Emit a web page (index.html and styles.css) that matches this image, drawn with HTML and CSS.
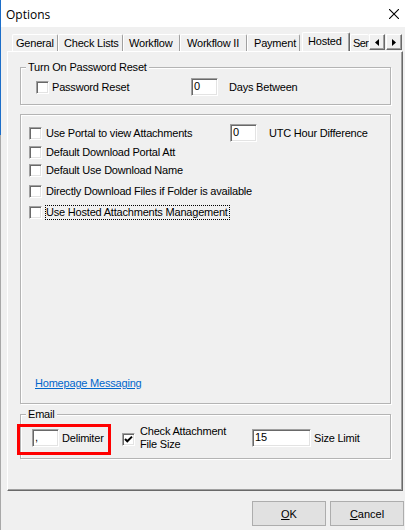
FILE: index.html
```html
<!DOCTYPE html>
<html lang="en">
<head>
    <meta charset="UTF-8">
    <title>Options</title>
    <link rel="stylesheet" href="styles.css">
</head>
<body>
    <div class="window">
        <div class="titlebar">
            <span class="title">Options</span>
            <svg class="close" width="10" height="10" viewBox="0 0 10 10">
                <path d="M0 0 L10 10 M10 0 L0 10" stroke="#000" stroke-width="1.1" fill="none"/>
            </svg>
        </div>

        <div class="tabstrip">
            <div class="tabs">
                <div class="tab tab-general">General</div>
                <div class="tab tab-checklists">Check Lists</div>
                <div class="tab tab-workflow">Workflow</div>
                <div class="tab tab-workflow2">Workflow II</div>
                <div class="tab tab-payment">Payment</div>
                <div class="tab tab-hosted selected">Hosted</div>
                <div class="tab tab-security">Ser</div>
            </div>
            <div class="scroller">
                <div class="scroll-btn">
                    <svg width="4" height="7" viewBox="0 0 4 7"><path d="M4 0 L0 3.5 L4 7 Z" fill="#000"/></svg>
                </div>
                <div class="scroll-btn">
                    <svg width="4" height="7" viewBox="0 0 4 7"><path d="M0 0 L4 3.5 L0 7 Z" fill="#000"/></svg>
                </div>
            </div>
        </div>

        <div class="panel">
            <div class="group group-password">
                <span class="group-label">Turn On Password Reset</span>
                <div class="row">
                    <label class="check-item check-tight pw-check">
                        <span class="checkbox"></span>
                        <span>Password Reset</span>
                    </label>
                    <span class="textbox tb-small">0</span>
                    <span class="after-label">Days Between</span>
                </div>
            </div>

            <div class="group group-hosted">
                <div class="row row-1">
                    <label class="check-item portal-check">
                        <span class="checkbox"></span>
                        <span>Use Portal to view Attachments</span>
                    </label>
                    <span class="textbox tb-small">0</span>
                    <span class="after-label">UTC Hour Difference</span>
                </div>
                <div class="row row-2">
                    <label class="check-item">
                        <span class="checkbox"></span>
                        <span>Default Download Portal Att</span>
                    </label>
                </div>
                <div class="row row-3">
                    <label class="check-item">
                        <span class="checkbox"></span>
                        <span>Default Use Download Name</span>
                    </label>
                </div>
                <div class="row row-4">
                    <label class="check-item">
                        <span class="checkbox"></span>
                        <span>Directly Download Files if Folder is available</span>
                    </label>
                </div>
                <div class="row row-5">
                    <label class="check-item">
                        <span class="checkbox"></span>
                        <span class="focused">Use Hosted Attachments Management</span>
                    </label>
                </div>
                <a class="link" href="#">Homepage Messaging</a>
            </div>

            <div class="group group-email">
                <span class="group-label">Email</span>
                <div class="highlight"></div>
                <div class="row">
                    <div class="delim-field">
                        <span class="textbox tb-small">,</span>
                        <span class="delim-label">Delimiter</span>
                    </div>
                    <label class="check-item size-check">
                        <span class="checkbox checked">
                            <svg width="11" height="11" viewBox="0 0 11 11"><path d="M2 5 L4.3 7.3 L9 2.6" stroke="#000" stroke-width="2" fill="none"/></svg>
                        </span>
                        <span class="two-line">Check Attachment<br>File Size</span>
                    </label>
                    <span class="textbox tb-wide">15</span>
                    <span class="delim-label">Size Limit</span>
                </div>
            </div>
        </div>

        <div class="buttons">
            <button class="btn"><u>O</u>K</button>
            <button class="btn"><u>C</u>ancel</button>
        </div>
    </div>
</body>
</html>
```

FILE: styles.css
```css
body {
    margin: 0;
    background-color: #f0f0f0;
    font-family: "Liberation Sans", Arial, sans-serif;
    font-size: 11px;
    letter-spacing: -0.2px;
    color: #000;
}

.window {
    width: 405px;
    height: 530px;
    box-sizing: border-box;
    overflow: hidden;
    border-left: 1px solid #1c6ec9;
    border-image: linear-gradient(to bottom, #1c6ec9 0, #1c6ec9 135px, #a8a8a8 135px) 1;
    background-color: #f0f0f0;
}

.titlebar {
    height: 27px;
    background-color: #fff;
    display: flex;
    align-items: center;
    justify-content: space-between;
    padding: 0 6px 0 5px;
}

.title {
    font-family: "Open Sans", "Noto Sans", sans-serif;
    font-size: 12px;
    letter-spacing: 0;
    margin-top: 1px;
}

.close {
    margin-top: 1px;
}

/* tabs */
.tabstrip {
    height: 24px;
    display: flex;
    padding-left: 11px;
}

.tabs {
    width: 357px;
    display: flex;
    align-items: flex-end;
    overflow: hidden;
}

.tab {
    flex: none;
    box-sizing: border-box;
    height: 17px;
    line-height: 16px;
    padding-left: 3px;
    border-top: 1px solid #fff;
    border-left: 1px solid #fff;
    border-right: 1px solid #a0a0a0;
    border-radius: 2px 2px 0 0;
    background-color: #f0f0f0;
    white-space: nowrap;
}

.tab-general { width: 46px; }
.tab-checklists { width: 65px; padding-left: 5px; }
.tab-workflow { width: 57px; padding-left: 5px; }
.tab-workflow2 { width: 67px; padding-left: 6px; }
.tab-payment { width: 53px; margin-right: 2px; padding-left: 6px; }
.tab-hosted { width: 48px; padding-left: 5px; }
.tab-security { width: 19px; padding-left: 2px; letter-spacing: -0.6px; border-right: none; }

.tab.selected {
    height: 20px;
    line-height: 17px;
    margin-bottom: -1px;
    position: relative;
    z-index: 1;
    border-right: 1px solid #696969;
    box-shadow: inset -1px 0 #a0a0a0;
}

.scroller {
    display: flex;
    margin-top: 7px;
    gap: 1px;
}

.scroll-btn {
    width: 16px;
    height: 16px;
    box-sizing: border-box;
    display: flex;
    align-items: center;
    justify-content: center;
    background-color: #f0f0f0;
    border-top: 1px solid #fff;
    border-left: 1px solid #fff;
    border-right: 1px solid #696969;
    border-bottom: 1px solid #696969;
    box-shadow: inset -1px -1px #a0a0a0;
}

/* panel */
.panel {
    width: 396px;
    height: 440px;
    box-sizing: border-box;
    margin-left: 6px;
    padding: 15px 11px 0 12px;
    border-top: 1px solid #fff;
    border-left: 1px solid #fff;
    border-right: 1px solid #696969;
    border-bottom: 1px solid #696969;
    box-shadow: inset -1px -1px #a0a0a0;
}

.group {
    position: relative;
    box-sizing: border-box;
    border: 1px solid #b4b4b4;
    box-shadow: 1px 1px #fff, inset 1px 1px #fff;
}

.group-label {
    position: absolute;
    top: -7px;
    left: 5px;
    padding: 0 2px;
    line-height: 13px;
    background-color: #f0f0f0;
}

.row {
    display: flex;
    align-items: center;
    height: 18px;
}

.check-item {
    display: flex;
    align-items: center;
    gap: 4px;
    white-space: nowrap;
}

.check-tight {
    gap: 3px;
}

.checkbox {
    flex: none;
    width: 13px;
    height: 13px;
    box-sizing: border-box;
    display: flex;
    align-items: center;
    justify-content: center;
    background-color: #fff;
    border: 1px solid;
    border-color: #a0a0a0 #fff #fff #a0a0a0;
    box-shadow: inset 1px 1px #696969, inset -1px -1px #e3e3e3;
}

.textbox {
    flex: none;
    height: 18px;
    box-sizing: border-box;
    padding-left: 2px;
    line-height: 15px;
    background-color: #fff;
    border: 1px solid;
    border-color: #a0a0a0 #fff #fff #a0a0a0;
    box-shadow: inset 1px 1px #696969, inset -1px -1px #e3e3e3;
}

.tb-small { width: 27px; }
.tb-wide { width: 59px; }

.after-label {
    margin-left: 11px;
}

/* turn on password reset */
.group-password {
    height: 38px;
    padding: 10px 0 0 15px;
}

.pw-check {
    width: 155px;
}

/* hosted attachments */
.group-hosted {
    height: 290px;
    margin-top: 9px;
    padding: 0 0 11px 8px;
    display: flex;
    flex-direction: column;
}

.row-1 { margin-top: 9px; }
.row-2 { margin-top: 1px; }
.row-4 { margin-top: 3px; }
.row-5 { margin-top: 3px; }

.portal-check {
    width: 201px;
}

.row-1 .after-label {
    margin-left: 12px;
}

.focused {
    outline: 1px dotted #000;
    padding: 0 1px 0 0;
    line-height: 13px;
}

.link {
    margin-top: auto;
    margin-left: 6px;
    line-height: 18px;
    color: #0066cc;
    align-self: flex-start;
}

/* email */
.group-email {
    height: 45px;
    margin-top: 10px;
    padding: 14px 0 0 11px;
}

.highlight {
    position: absolute;
    left: -4px;
    top: 9px;
    width: 94px;
    height: 31px;
    box-sizing: border-box;
    border: 3px solid #ff0000;
}

.delim-field {
    width: 90px;
    display: flex;
    align-items: center;
}

.delim-label {
    margin-left: 3px;
}

.size-check {
    width: 130px;
    gap: 5px;
}

.size-check .checkbox {
    margin-top: 3px;
}

.two-line {
    line-height: 13px;
}

/* dialog buttons */
.buttons {
    display: flex;
    justify-content: flex-end;
    gap: 4px;
    margin-top: 10px;
    padding-right: 1px;
}

.btn {
    width: 74px;
    height: 25px;
    font-family: "Liberation Sans", Arial, sans-serif;
    font-size: 11px;
    color: #000;
    background-color: #e1e1e1;
    border: 1px solid #adadad;
    padding: 0;
}
```
